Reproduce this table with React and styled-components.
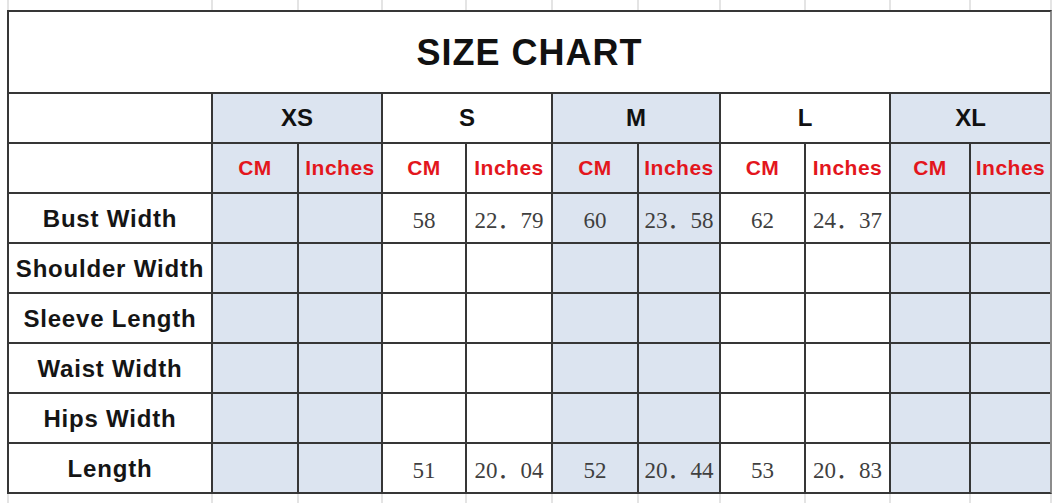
import React from 'react';
import styled, { createGlobalStyle } from 'styled-components';

const GlobalStyle = createGlobalStyle`
  html, body {
    margin: 0;
    padding: 0;
    background: #fff;
  }
  body {
    font-family: "Liberation Sans", Arial, sans-serif;
    width: 1064px;
    height: 503px;
    overflow: hidden;
  }
`;

const COLUMNS = '202px 84px 82px 82px 84px 84px 80px 83px 83px 78px 79px';
const BLUE = '#dce4f0';

const Sheet = styled.div`
  display: flex;
  flex-direction: column;
  width: 1064px;
  height: 503px;
`;

const GridStrip = styled.div`
  display: grid;
  grid-template-columns: ${COLUMNS};
  column-gap: 2px;
  height: ${({ $height }) => $height}px;
  margin-left: 7px;
  padding: 0 2px;
  width: fit-content;
  background: #e4e4e4;
`;

const StripCell = styled.div`
  background: #fff;
`;

const Table = styled.div`
  display: grid;
  grid-template-columns: ${COLUMNS};
  grid-template-rows: 80px repeat(8, 48px);
  gap: 2px;
  width: fit-content;
  margin-left: 7px;
  background: #363636;
  border: 2px solid #363636;
  border-right-color: #8c8c8c;
`;

const Cell = styled.div`
  display: flex;
  align-items: center;
  justify-content: center;
  background: ${({ $blue }) => ($blue ? BLUE : '#fff')};
  grid-column: ${({ $span }) => ($span ? `span ${$span}` : 'auto')};
  white-space: nowrap;
  overflow: hidden;
`;

const Title = styled(Cell)`
  font-size: 36px;
  font-weight: bold;
  letter-spacing: 1px;
  color: #111;
  padding-top: 2px;
`;

const SizeCell = styled(Cell)`
  font-size: 24px;
  font-weight: bold;
  color: #111;
`;

const UnitCell = styled(Cell)`
  font-size: 21px;
  font-weight: bold;
  letter-spacing: 0.5px;
  color: #e3161d;
`;

const LabelCell = styled(Cell)`
  font-size: 24px;
  font-weight: bold;
  color: #151515;
  letter-spacing: 0.8px;
  padding-top: 3px;
`;

const ValueCell = styled(Cell)`
  font-family: "Liberation Serif", "Noto Sans CJK SC", serif;
  font-size: 23px;
  line-height: 24px;
  color: #3f3f3f;
  padding-top: 6px;
`;

const sizes = ['XS', 'S', 'M', 'L', 'XL'];

const rows = [
  { label: 'Bust Width', values: { S: ['58', '22．79'], M: ['60', '23．58'], L: ['62', '24．37'] } },
  { label: 'Shoulder Width', values: {} },
  { label: 'Sleeve Length', values: {} },
  { label: 'Waist Width', values: {} },
  { label: 'Hips Width', values: {} },
  { label: 'Length', values: { S: ['51', '20．04'], M: ['52', '20．44'], L: ['53', '20．83'] } },
];

const isBlue = (i) => i % 2 === 0;

const App = () => {
  return (
    <>
      <GlobalStyle />
      <Sheet>
        <GridStrip $height={10}>
          {Array.from({ length: 11 }).map((_, i) => (
            <StripCell key={i} />
          ))}
        </GridStrip>
        <Table>
          <Title $span={11}>SIZE CHART</Title>

          <Cell />
          {sizes.map((s, i) => (
            <SizeCell key={s} $span={2} $blue={isBlue(i)}>
              {s}
            </SizeCell>
          ))}

          <Cell />
          {sizes.map((s, i) => (
            <React.Fragment key={s}>
              <UnitCell $blue={isBlue(i)}>CM</UnitCell>
              <UnitCell $blue={isBlue(i)}>Inches</UnitCell>
            </React.Fragment>
          ))}

          {rows.map((row) => (
            <React.Fragment key={row.label}>
              <LabelCell>{row.label}</LabelCell>
              {sizes.map((s, i) => {
                const v = row.values[s] || ['', ''];
                return (
                  <React.Fragment key={s}>
                    <ValueCell $blue={isBlue(i)}>{v[0]}</ValueCell>
                    <ValueCell $blue={isBlue(i)}>{v[1]}</ValueCell>
                  </React.Fragment>
                );
              })}
            </React.Fragment>
          ))}
        </Table>
        <GridStrip $height={10}>
          {Array.from({ length: 11 }).map((_, i) => (
            <StripCell key={i} />
          ))}
        </GridStrip>
      </Sheet>
    </>
  );
};

export default App;
